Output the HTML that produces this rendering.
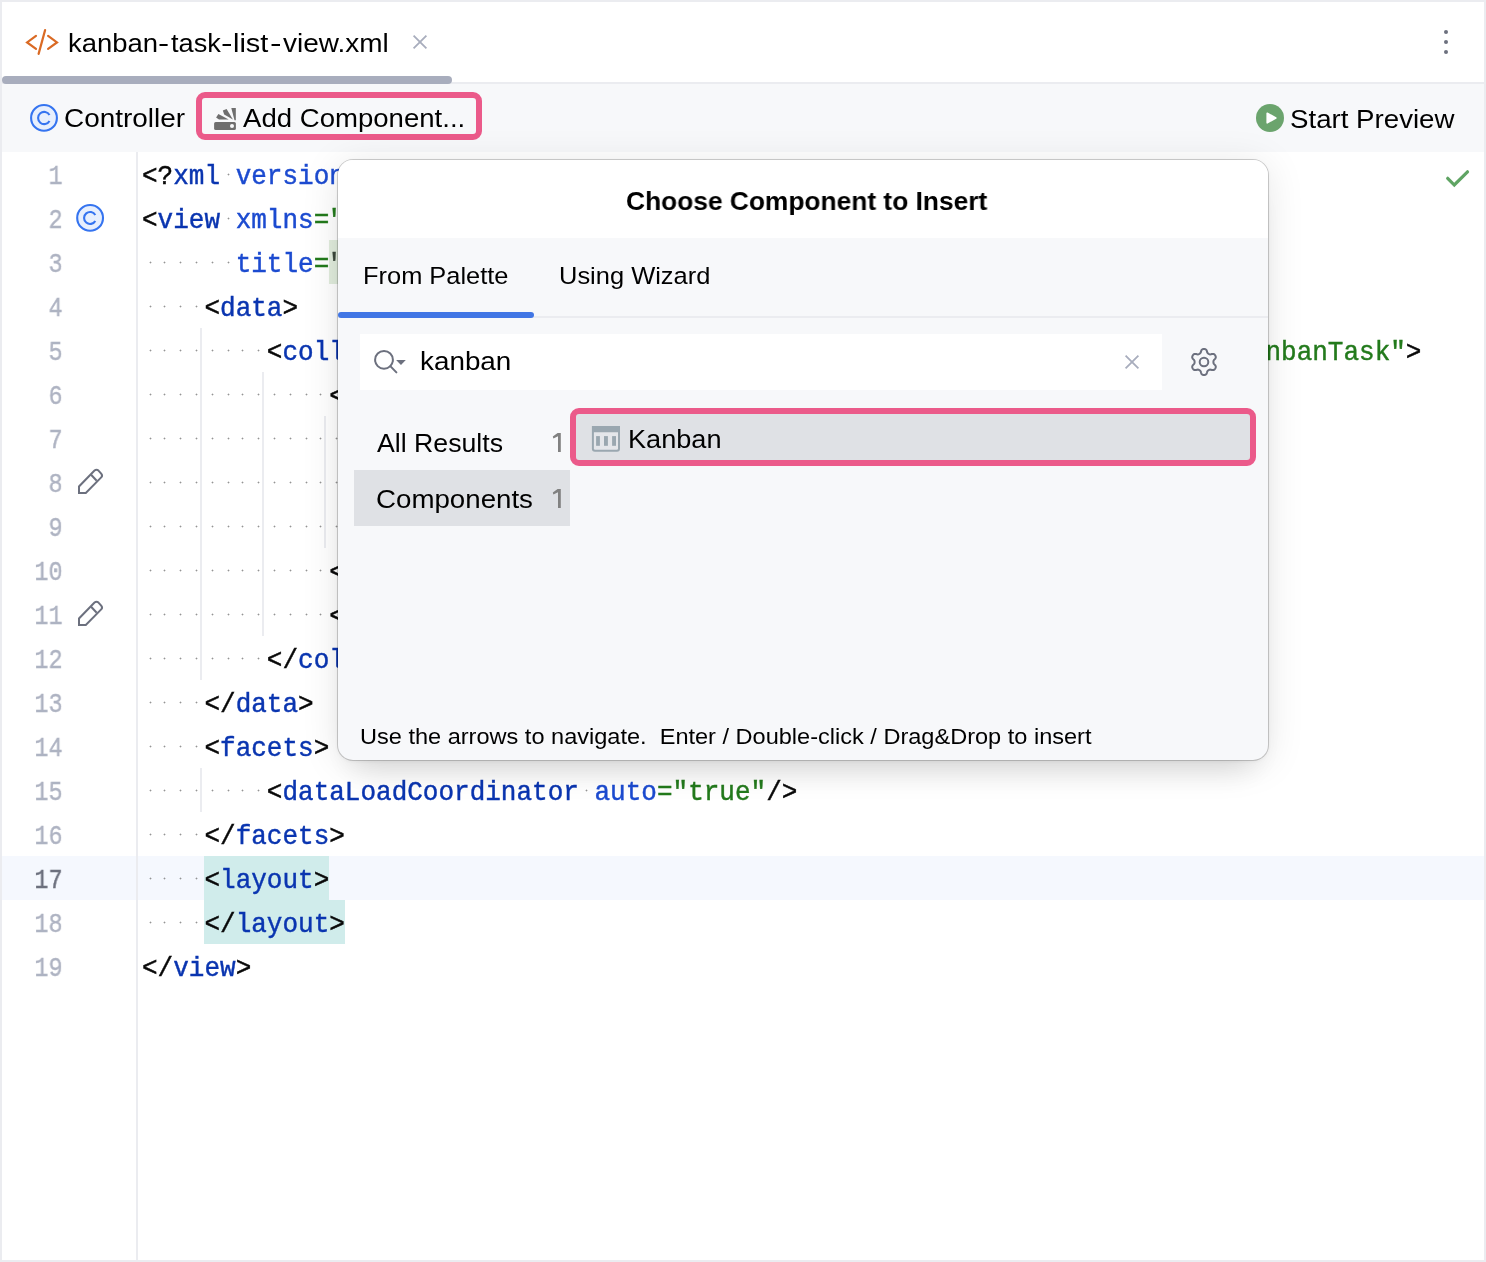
<!DOCTYPE html>
<html><head><meta charset="utf-8">
<style>
*{box-sizing:border-box;margin:0;padding:0}
html,body{width:1486px;height:1262px;overflow:hidden;background:#fff}
body{position:relative;font-family:"Liberation Sans",sans-serif;color:#000}
.abs{position:absolute}
#frame{position:absolute;left:0;top:0;width:1486px;height:1262px;border:2px solid #EBECF0;z-index:50;pointer-events:none}
#tabsep{left:2px;top:82px;width:1482px;height:2px;background:#EBECF0}
#tabul{left:2px;top:76px;width:450px;height:8px;background:#A8ADBD;border-radius:4px}
#toolbar{left:2px;top:84px;width:1482px;height:68px;background:#F7F8FA}
.tx,.cl,.ln{will-change:transform}
.tx i{font-style:normal;display:inline-block;margin:0 1.45px;transform:scaleX(1.27)}
.tx{position:absolute;white-space:pre;transform-origin:0 0}
#gutline{left:136px;top:152px;width:2px;height:1108px;background:#EBECF0}
#curline{left:2px;top:856px;width:1482px;height:44px;background:#F5F8FE}
.ln{position:absolute;left:2px;width:60.5px;height:44px;line-height:44px;text-align:right;font-family:"Liberation Mono",monospace;font-size:26px;color:#AEB3C2;transform:scale(0.9,1.07);transform-origin:100% 29px;-webkit-text-stroke:0.4px}
.ln.cur{color:#6C707E}
.cl{position:absolute;left:142px;height:44px;line-height:44px;font-family:"Liberation Mono",monospace;font-size:26px;white-space:pre;color:#080808;transform:scaleY(1.08);transform-origin:0 29px;-webkit-text-stroke:0.42px}
.p{color:#080808}.t{color:#0A35B0}.a{color:#1C4BD0}.g{color:#237A1C}.gh{color:#3C483C}
.d{position:absolute;width:1px;height:1px;background:#949494;box-shadow:1px 0 0 rgba(0,0,0,0.15),-1px 0 0 rgba(0,0,0,0.15),0 1px 0 rgba(0,0,0,0.15),0 -1px 0 rgba(0,0,0,0.15)}
.hlb{position:absolute;background:#D0ECEB;height:44px}
.guide{position:absolute;width:2px;background:#EBECF0}
#popup{left:338px;top:160px;width:930px;height:600px;border-radius:15px;background:#F7F8FA;box-shadow:0 0 0 1px rgba(0,0,0,0.18),0 1px 5px rgba(0,0,0,0.07),0 4px 38px rgba(0,0,0,0.10),0 24px 32px -16px rgba(0,0,0,0.125);overflow:hidden;z-index:10}
#popup .hdr{position:absolute;left:0;top:0;width:930px;height:78px;background:#fff}
</style></head><body>
<div class="abs" id="tabsep"></div>
<div class="abs" id="tabul"></div>
<div class="abs" id="toolbar"></div>
<div class="abs" id="curline"></div>
<div class="abs" id="gutline"></div>
<!-- tab -->
<svg class="abs" style="left:24px;top:26px" width="36" height="36" viewBox="0 0 36 36"><g fill="none" stroke="#DA6A24" stroke-width="2.2" stroke-linecap="round" stroke-linejoin="miter"><path d="M12 9.9 L3.1 16.4 L12 22.9"/><path d="M24.1 9.9 L33 16.4 L24.1 22.9"/><path d="M21.1 4.1 L14.6 27.9"/></g></svg>
<svg class="abs" style="left:411px;top:33px" width="18" height="18" viewBox="0 0 18 18"><path d="M2.6 2.6 L15.4 15.4 M15.4 2.6 L2.6 15.4" stroke="#A8ADBD" stroke-width="1.8" fill="none"/></svg>
<svg class="abs" style="left:1440px;top:28px" width="12" height="30" viewBox="0 0 12 30"><circle cx="6" cy="4" r="2" fill="#6C707E"/><circle cx="6" cy="14" r="2" fill="#6C707E"/><circle cx="6" cy="24" r="2" fill="#6C707E"/></svg>
<!-- toolbar -->
<svg class="abs" style="left:28px;top:102px" width="32" height="32" viewBox="0 0 32 32"><circle cx="16" cy="15.9" r="12.9" fill="#E7EFFD" stroke="#3574F0" stroke-width="2.1"/><path d="M21.5 13 A6.1 6.1 0 1 0 21.5 19" fill="none" stroke="#3574F0" stroke-width="2.1"/></svg>
<div class="abs" id="addbox" style="left:196px;top:92px;width:286px;height:48px;border:6px solid #EB5A8A;border-radius:9px"></div>
<svg class="abs" id="addicon" style="left:212px;top:106px" width="26" height="26" viewBox="0 0 26 26"><g fill="#6E6E6E"><rect x="2.1" y="16" width="21.8" height="8" rx="1.6"/><path d="M19.3 2.1 L23.8 2.1 L23.8 14.2 L22.5 14.2 Z"/><path d="M10.8 4.5 L14.6 2.9 L20.9 13.6 L12.2 8.4 Z"/><path d="M6.4 8 L16.7 13.4 L7 13.6 L4.1 11.4 Z"/></g><circle cx="20" cy="20" r="2" fill="#F7F8FA"/></svg>
<svg class="abs" style="left:1255px;top:103px" width="30" height="30" viewBox="0 0 30 30"><circle cx="15" cy="15" r="14" fill="#6BA46D"/><path d="M12.2 10.2 L20.8 15 L12.2 19.8 Z" fill="#fff" stroke="#fff" stroke-width="1.6" stroke-linejoin="round"/></svg>
<!-- gutter icons -->
<svg class="abs" style="left:75px;top:203px" width="30" height="30" viewBox="0 0 30 30"><circle cx="15.1" cy="14.9" r="12.9" fill="#E7EFFD" stroke="#3574F0" stroke-width="2.1"/><path d="M20.3 12 A6 6 0 1 0 20.3 17.9" fill="none" stroke="#3574F0" stroke-width="2.1"/></svg>
<svg class="abs pencil" style="left:76px;top:466px" width="30" height="30" viewBox="0 0 30 30"><g fill="none" stroke="#6C707E" stroke-width="2" stroke-linejoin="miter"><path d="M3 27 L3 20.5 L18.5 4.6 Q20.5 2.9 22.5 4.6 L25.2 7.6 Q26.9 9.6 25.2 11.4 L9.8 27 Z"/><path d="M15.1 8.8 L20.7 14.8"/></g></svg>
<svg class="abs pencil" style="left:76px;top:598px" width="30" height="30" viewBox="0 0 30 30"><g fill="none" stroke="#6C707E" stroke-width="2" stroke-linejoin="miter"><path d="M3 27 L3 20.5 L18.5 4.6 Q20.5 2.9 22.5 4.6 L25.2 7.6 Q26.9 9.6 25.2 11.4 L9.8 27 Z"/><path d="M15.1 8.8 L20.7 14.8"/></g></svg>
<!-- checkmark -->
<svg class="abs" style="left:1442px;top:164px" width="30" height="26" viewBox="0 0 30 26"><path d="M5.7 14.3 L12.3 21 L25.5 7.8" fill="none" stroke="#5FA463" stroke-width="3.2" stroke-linecap="round" stroke-linejoin="miter"/></svg>
<!-- guides -->
<div class="guide" style="left:200px;top:328px;height:352px"></div>
<div class="guide" style="left:262px;top:372px;height:264px"></div>
<div class="guide" style="left:324px;top:416px;height:132px"></div>
<div class="guide" style="left:200px;top:768px;height:44px"></div>
<div class="abs" style="left:329px;top:240px;width:500px;height:44px;background:#E1EDDD"></div><div class="hlb" style="left:204px;top:856px;width:125px"></div><div class="hlb" style="left:204px;top:900px;width:141px"></div>
<div class="ln" style="top:154.5px">1</div>
<div class="cl" style="top:155px"><span class="p">&lt;?</span><span class="t">xml</span> <span class="a">version</span><span class="g">=&quot;1.0&quot;</span> <span class="a">encoding</span><span class="g">=&quot;UTF-8&quot;</span> <span class="a">standalone</span><span class="g">=&quot;no&quot;</span><span class="p">?&gt;</span></div>
<div class="ln" style="top:198.5px">2</div>
<div class="cl" style="top:199px"><span class="p">&lt;</span><span class="t">view</span> <span class="a">xmlns</span><span class="g">=&quot;urn:jmix:schema:flowui:view&quot;</span></div>
<div class="ln" style="top:242.5px">3</div>
<div class="cl" style="top:243px">      <span class="a">title</span><span class="g">=</span><span class="gh">&quot;msg://kanbanTaskListView.title&quot;</span><span class="p">&gt;</span></div>
<div class="ln" style="top:286.5px">4</div>
<div class="cl" style="top:287px">    <span class="p">&lt;</span><span class="t">data</span><span class="p">&gt;</span></div>
<div class="ln" style="top:330.5px">5</div>
<div class="cl" style="top:331px">        <span class="p">&lt;</span><span class="t">collection</span> <span class="a">id</span><span class="g">=&quot;kanbanTasksDc&quot;</span> <span class="a">class</span><span class="g">=&quot;com.company.demo.entity.KanbanTask&quot;</span><span class="p">&gt;</span></div>
<div class="ln" style="top:374.5px">6</div>
<div class="cl" style="top:375px">            <span class="p">&lt;</span><span class="t">fetchPlan</span> <span class="a">extends</span><span class="g">=&quot;_base&quot;</span><span class="p">&gt;</span></div>
<div class="ln" style="top:418.5px">7</div>
<div class="cl" style="top:419px">                <span class="p">&lt;</span><span class="t">property</span> <span class="a">name</span><span class="g">=&quot;assignee&quot;</span><span class="p">/&gt;</span></div>
<div class="ln" style="top:462.5px">8</div>
<div class="cl" style="top:463px">                <span class="p">&lt;</span><span class="t">property</span> <span class="a">name</span><span class="g">=&quot;status&quot;</span><span class="p">/&gt;</span></div>
<div class="ln" style="top:506.5px">9</div>
<div class="cl" style="top:507px">                <span class="p">&lt;</span><span class="t">property</span> <span class="a">name</span><span class="g">=&quot;tags&quot;</span><span class="p">/&gt;</span></div>
<div class="ln" style="top:550.5px">10</div>
<div class="cl" style="top:551px">            <span class="p">&lt;/</span><span class="t">fetchPlan</span><span class="p">&gt;</span></div>
<div class="ln" style="top:594.5px">11</div>
<div class="cl" style="top:595px">            <span class="p">&lt;</span><span class="t">loader</span> <span class="a">id</span><span class="g">=&quot;kanbanTasksDl&quot;</span><span class="p">/&gt;</span></div>
<div class="ln" style="top:638.5px">12</div>
<div class="cl" style="top:639px">        <span class="p">&lt;/</span><span class="t">collection</span><span class="p">&gt;</span></div>
<div class="ln" style="top:682.5px">13</div>
<div class="cl" style="top:683px">    <span class="p">&lt;/</span><span class="t">data</span><span class="p">&gt;</span></div>
<div class="ln" style="top:726.5px">14</div>
<div class="cl" style="top:727px">    <span class="p">&lt;</span><span class="t">facets</span><span class="p">&gt;</span></div>
<div class="ln" style="top:770.5px">15</div>
<div class="cl" style="top:771px">        <span class="p">&lt;</span><span class="t">dataLoadCoordinator</span> <span class="a">auto</span><span class="g">=&quot;true&quot;</span><span class="p">/&gt;</span></div>
<div class="ln" style="top:814.5px">16</div>
<div class="cl" style="top:815px">    <span class="p">&lt;/</span><span class="t">facets</span><span class="p">&gt;</span></div>
<div class="ln cur" style="top:858.5px">17</div>
<div class="cl" style="top:859px">    <span class="hl"><span class="p">&lt;</span><span class="t">layout</span><span class="p">&gt;</span></span></div>
<div class="ln" style="top:902.5px">18</div>
<div class="cl" style="top:903px">    <span class="hl"><span class="p">&lt;/</span><span class="t">layout</span><span class="p">&gt;</span></span></div>
<div class="ln" style="top:946.5px">19</div>
<div class="cl" style="top:947px"><span class="p">&lt;/</span><span class="t">view</span><span class="p">&gt;</span></div>
<i class="d" style="left:228px;top:174px"></i><i class="d" style="left:446px;top:174px"></i><i class="d" style="left:710px;top:174px"></i><i class="d" style="left:228px;top:218px"></i><i class="d" style="left:150px;top:262px"></i><i class="d" style="left:164px;top:262px"></i><i class="d" style="left:180px;top:262px"></i><i class="d" style="left:196px;top:262px"></i><i class="d" style="left:212px;top:262px"></i><i class="d" style="left:228px;top:262px"></i><i class="d" style="left:150px;top:306px"></i><i class="d" style="left:164px;top:306px"></i><i class="d" style="left:180px;top:306px"></i><i class="d" style="left:196px;top:306px"></i><i class="d" style="left:150px;top:350px"></i><i class="d" style="left:164px;top:350px"></i><i class="d" style="left:180px;top:350px"></i><i class="d" style="left:196px;top:350px"></i><i class="d" style="left:212px;top:350px"></i><i class="d" style="left:228px;top:350px"></i><i class="d" style="left:242px;top:350px"></i><i class="d" style="left:258px;top:350px"></i><i class="d" style="left:446px;top:350px"></i><i class="d" style="left:742px;top:350px"></i><i class="d" style="left:150px;top:394px"></i><i class="d" style="left:164px;top:394px"></i><i class="d" style="left:180px;top:394px"></i><i class="d" style="left:196px;top:394px"></i><i class="d" style="left:212px;top:394px"></i><i class="d" style="left:228px;top:394px"></i><i class="d" style="left:242px;top:394px"></i><i class="d" style="left:258px;top:394px"></i><i class="d" style="left:274px;top:394px"></i><i class="d" style="left:290px;top:394px"></i><i class="d" style="left:306px;top:394px"></i><i class="d" style="left:320px;top:394px"></i><i class="d" style="left:492px;top:394px"></i><i class="d" style="left:150px;top:438px"></i><i class="d" style="left:164px;top:438px"></i><i class="d" style="left:180px;top:438px"></i><i class="d" style="left:196px;top:438px"></i><i class="d" style="left:212px;top:438px"></i><i class="d" style="left:228px;top:438px"></i><i class="d" style="left:242px;top:438px"></i><i class="d" style="left:258px;top:438px"></i><i class="d" style="left:274px;top:438px"></i><i class="d" style="left:290px;top:438px"></i><i class="d" style="left:306px;top:438px"></i><i class="d" style="left:320px;top:438px"></i><i class="d" style="left:336px;top:438px"></i><i class="d" style="left:352px;top:438px"></i><i class="d" style="left:368px;top:438px"></i><i class="d" style="left:384px;top:438px"></i><i class="d" style="left:540px;top:438px"></i><i class="d" style="left:150px;top:482px"></i><i class="d" style="left:164px;top:482px"></i><i class="d" style="left:180px;top:482px"></i><i class="d" style="left:196px;top:482px"></i><i class="d" style="left:212px;top:482px"></i><i class="d" style="left:228px;top:482px"></i><i class="d" style="left:242px;top:482px"></i><i class="d" style="left:258px;top:482px"></i><i class="d" style="left:274px;top:482px"></i><i class="d" style="left:290px;top:482px"></i><i class="d" style="left:306px;top:482px"></i><i class="d" style="left:320px;top:482px"></i><i class="d" style="left:336px;top:482px"></i><i class="d" style="left:352px;top:482px"></i><i class="d" style="left:368px;top:482px"></i><i class="d" style="left:384px;top:482px"></i><i class="d" style="left:540px;top:482px"></i><i class="d" style="left:150px;top:526px"></i><i class="d" style="left:164px;top:526px"></i><i class="d" style="left:180px;top:526px"></i><i class="d" style="left:196px;top:526px"></i><i class="d" style="left:212px;top:526px"></i><i class="d" style="left:228px;top:526px"></i><i class="d" style="left:242px;top:526px"></i><i class="d" style="left:258px;top:526px"></i><i class="d" style="left:274px;top:526px"></i><i class="d" style="left:290px;top:526px"></i><i class="d" style="left:306px;top:526px"></i><i class="d" style="left:320px;top:526px"></i><i class="d" style="left:336px;top:526px"></i><i class="d" style="left:352px;top:526px"></i><i class="d" style="left:368px;top:526px"></i><i class="d" style="left:384px;top:526px"></i><i class="d" style="left:540px;top:526px"></i><i class="d" style="left:150px;top:570px"></i><i class="d" style="left:164px;top:570px"></i><i class="d" style="left:180px;top:570px"></i><i class="d" style="left:196px;top:570px"></i><i class="d" style="left:212px;top:570px"></i><i class="d" style="left:228px;top:570px"></i><i class="d" style="left:242px;top:570px"></i><i class="d" style="left:258px;top:570px"></i><i class="d" style="left:274px;top:570px"></i><i class="d" style="left:290px;top:570px"></i><i class="d" style="left:306px;top:570px"></i><i class="d" style="left:320px;top:570px"></i><i class="d" style="left:150px;top:614px"></i><i class="d" style="left:164px;top:614px"></i><i class="d" style="left:180px;top:614px"></i><i class="d" style="left:196px;top:614px"></i><i class="d" style="left:212px;top:614px"></i><i class="d" style="left:228px;top:614px"></i><i class="d" style="left:242px;top:614px"></i><i class="d" style="left:258px;top:614px"></i><i class="d" style="left:274px;top:614px"></i><i class="d" style="left:290px;top:614px"></i><i class="d" style="left:306px;top:614px"></i><i class="d" style="left:320px;top:614px"></i><i class="d" style="left:446px;top:614px"></i><i class="d" style="left:150px;top:658px"></i><i class="d" style="left:164px;top:658px"></i><i class="d" style="left:180px;top:658px"></i><i class="d" style="left:196px;top:658px"></i><i class="d" style="left:212px;top:658px"></i><i class="d" style="left:228px;top:658px"></i><i class="d" style="left:242px;top:658px"></i><i class="d" style="left:258px;top:658px"></i><i class="d" style="left:150px;top:702px"></i><i class="d" style="left:164px;top:702px"></i><i class="d" style="left:180px;top:702px"></i><i class="d" style="left:196px;top:702px"></i><i class="d" style="left:150px;top:746px"></i><i class="d" style="left:164px;top:746px"></i><i class="d" style="left:180px;top:746px"></i><i class="d" style="left:196px;top:746px"></i><i class="d" style="left:150px;top:790px"></i><i class="d" style="left:164px;top:790px"></i><i class="d" style="left:180px;top:790px"></i><i class="d" style="left:196px;top:790px"></i><i class="d" style="left:212px;top:790px"></i><i class="d" style="left:228px;top:790px"></i><i class="d" style="left:242px;top:790px"></i><i class="d" style="left:258px;top:790px"></i><i class="d" style="left:586px;top:790px"></i><i class="d" style="left:150px;top:834px"></i><i class="d" style="left:164px;top:834px"></i><i class="d" style="left:180px;top:834px"></i><i class="d" style="left:196px;top:834px"></i><i class="d" style="left:150px;top:878px"></i><i class="d" style="left:164px;top:878px"></i><i class="d" style="left:180px;top:878px"></i><i class="d" style="left:196px;top:878px"></i><i class="d" style="left:150px;top:922px"></i><i class="d" style="left:164px;top:922px"></i><i class="d" style="left:180px;top:922px"></i><i class="d" style="left:196px;top:922px"></i>
<div class="tx" style="left:68.04px;top:30px;font-size:26.5px;line-height:26.5px;transform:scaleX(1.0365)">kanban</div>
<div class="tx" style="left:158.32px;top:30px;font-size:26.5px;line-height:26.5px;transform:scaleX(1.2615)">-</div>
<div class="tx" style="left:170.89px;top:30px;font-size:26.5px;line-height:26.5px;transform:scaleX(1.025)">task</div>
<div class="tx" style="left:221.47px;top:30px;font-size:26.5px;line-height:26.5px;transform:scaleX(1.3077)">-</div>
<div class="tx" style="left:233.09px;top:30px;font-size:26.5px;line-height:26.5px;transform:scaleX(1.0918)">list</div>
<div class="tx" style="left:269.57px;top:30px;font-size:26.5px;line-height:26.5px;transform:scaleX(1.3077)">-</div>
<div class="tx" style="left:282.54px;top:30px;font-size:26.5px;line-height:26.5px;transform:scaleX(1.0561)">view.xml</div>
<div class="tx" style="left:63.88px;top:105px;font-size:26.5px;line-height:26.5px;transform:scaleX(1.0534)">Controller</div>
<div class="tx" style="left:243px;top:105px;font-size:26.5px;line-height:26.5px;transform:scaleX(1.0405)">Add Component...</div>
<div class="tx" style="left:1290.1px;top:106px;font-size:26.5px;line-height:26.5px;transform:scaleX(1.0438)">Start Preview</div>
<!-- popup -->
<div class="abs" id="popup">
 <div class="hdr"></div>
 <div class="abs" style="left:0;top:156px;width:930px;height:2px;background:#EBECF0"></div>
 <div class="abs" style="left:0;top:152px;width:196px;height:6px;background:#4176E5;border-radius:3px"></div>
 <div class="abs" style="left:22px;top:174px;width:802px;height:56px;background:#fff"></div>
 <svg class="abs" style="left:32px;top:186px" width="40" height="34" viewBox="0 0 40 34"><circle cx="14" cy="13.8" r="8.9" fill="none" stroke="#6C707E" stroke-width="2"/><path d="M20.3 20.1 L26.4 26.4" stroke="#6C707E" stroke-width="2" fill="none" stroke-linecap="round"/><path d="M26.1 14 L35.8 14 L30.95 18.9 Z" fill="#6C707E"/></svg>
 <svg class="abs" style="left:785px;top:193px" width="18" height="18" viewBox="0 0 18 18"><path d="M2.6 2.6 L15.4 15.4 M15.4 2.6 L2.6 15.4" stroke="#A8ADBD" stroke-width="1.8" fill="none"/></svg>
 <svg class="abs" id="gear" style="left:850px;top:186px" width="32" height="32" viewBox="0 0 32 32"><g fill="none" stroke="#6C707E" stroke-width="2" stroke-linejoin="round"><path d="M25.40 16.00 L25.41 15.51 L25.47 15.00 L25.64 14.47 L26.08 13.86 L26.82 13.10 L27.50 12.26 L27.80 11.47 L27.77 10.76 L27.56 10.11 L27.26 9.50 L26.88 8.93 L26.42 8.43 L25.82 8.05 L24.99 7.91 L23.92 8.08 L22.90 8.34 L22.14 8.41 L21.60 8.30 L21.13 8.10 L20.70 7.86 L20.28 7.60 L19.87 7.30 L19.50 6.88 L19.18 6.20 L18.90 5.18 L18.51 4.17 L17.98 3.52 L17.35 3.19 L16.68 3.04 L16.00 3.00 L15.32 3.04 L14.65 3.19 L14.02 3.52 L13.49 4.17 L13.10 5.18 L12.82 6.20 L12.50 6.88 L12.13 7.30 L11.72 7.60 L11.30 7.86 L10.87 8.10 L10.40 8.30 L9.86 8.41 L9.10 8.34 L8.08 8.08 L7.01 7.91 L6.18 8.05 L5.58 8.43 L5.12 8.93 L4.74 9.50 L4.44 10.11 L4.23 10.76 L4.20 11.47 L4.50 12.26 L5.18 13.10 L5.92 13.86 L6.36 14.47 L6.53 15.00 L6.59 15.51 L6.60 16.00 L6.59 16.49 L6.53 17.00 L6.36 17.53 L5.92 18.14 L5.18 18.90 L4.50 19.74 L4.20 20.53 L4.23 21.24 L4.44 21.89 L4.74 22.50 L5.12 23.07 L5.58 23.57 L6.18 23.95 L7.01 24.09 L8.08 23.92 L9.10 23.66 L9.86 23.59 L10.40 23.70 L10.87 23.90 L11.30 24.14 L11.72 24.40 L12.13 24.70 L12.50 25.12 L12.82 25.80 L13.10 26.82 L13.49 27.83 L14.02 28.48 L14.65 28.81 L15.32 28.96 L16.00 29.00 L16.68 28.96 L17.35 28.81 L17.98 28.48 L18.51 27.83 L18.90 26.82 L19.18 25.80 L19.50 25.12 L19.87 24.70 L20.28 24.40 L20.70 24.14 L21.13 23.90 L21.60 23.70 L22.14 23.59 L22.90 23.66 L23.92 23.92 L24.99 24.09 L25.82 23.95 L26.42 23.57 L26.88 23.07 L27.26 22.50 L27.56 21.89 L27.77 21.24 L27.80 20.53 L27.50 19.74 L26.82 18.90 L26.08 18.14 L25.64 17.53 L25.47 17.00 L25.41 16.49 Z"/><circle cx="16" cy="16" r="4.3"/></g></svg>
 <div class="abs" style="left:16px;top:310px;width:216px;height:56px;background:#DFE1E5"></div>
 <div class="abs" style="left:232px;top:248px;width:686px;height:58px;border:6px solid #EB5A8A;border-radius:9px;background:#DFE1E5"></div>
 <svg class="abs" id="kicon" style="left:252px;top:264px" width="32" height="30" viewBox="0 0 32 30"><path d="M1.9 1.9 H30 V24.8 Q30 27.8 27 27.8 H4.9 Q1.9 27.8 1.9 24.8 Z" fill="#9AA7B0"/><path d="M3.9 8.3 H28 V24.6 Q28 25.8 26.8 25.8 H5.1 Q3.9 25.8 3.9 24.6 Z" fill="#E4E6EA"/><g fill="#9AA7B0"><rect x="6.1" y="12.1" width="3.8" height="9.7"/><rect x="14" y="12.1" width="3.9" height="9.7"/><rect x="22.1" y="12.1" width="3.9" height="9.7"/></g></svg>
<svg class="abs" style="left:210px;top:270px" width="16" height="24" viewBox="0 0 16 24"><path d="M12.8 2.9 L12.8 21.9 L10 21.9 L10 6.2 L5.4 8.6 L4.8 6.4 L9.6 2.9 Z" fill="#818181"/></svg><svg class="abs" style="left:210px;top:326px" width="16" height="24" viewBox="0 0 16 24"><path d="M12.8 2.9 L12.8 21.9 L10 21.9 L10 6.2 L5.4 8.6 L4.8 6.4 L9.6 2.9 Z" fill="#818181"/></svg>
<div class="tx" style="left:288.01px;top:28px;font-size:26.5px;line-height:26.5px;transform:scaleX(0.9935);font-weight:bold">Choose Component to Insert</div>
<div class="tx" style="left:24.92px;top:104px;font-size:24.5px;line-height:24.5px;transform:scaleX(1.0375)">From Palette</div>
<div class="tx" style="left:220.62px;top:104px;font-size:24.5px;line-height:24.5px;transform:scaleX(1.0387)">Using Wizard</div>
<div class="tx" style="left:81.76px;top:188px;font-size:26.5px;line-height:26.5px;transform:scaleX(1.0503)">kanban</div>
<div class="tx" style="left:38.7px;top:270px;font-size:26.5px;line-height:26.5px;transform:scaleX(1.0068)">All Results</div>
<div class="tx" style="left:38.19px;top:326px;font-size:26.5px;line-height:26.5px;transform:scaleX(1.0446)">Components</div>
<div class="tx" style="left:289.7px;top:266px;font-size:26.5px;line-height:26.5px;transform:scaleX(1.024)">Kanban</div>
<div class="tx" style="left:22.07px;top:566px;font-size:22.5px;line-height:22.5px;transform:scaleX(1.0464)">Use the arrows to navigate.  Enter / Double-click / Drag&amp;Drop to insert</div>
</div>
<div id="frame"></div>
</body></html>
